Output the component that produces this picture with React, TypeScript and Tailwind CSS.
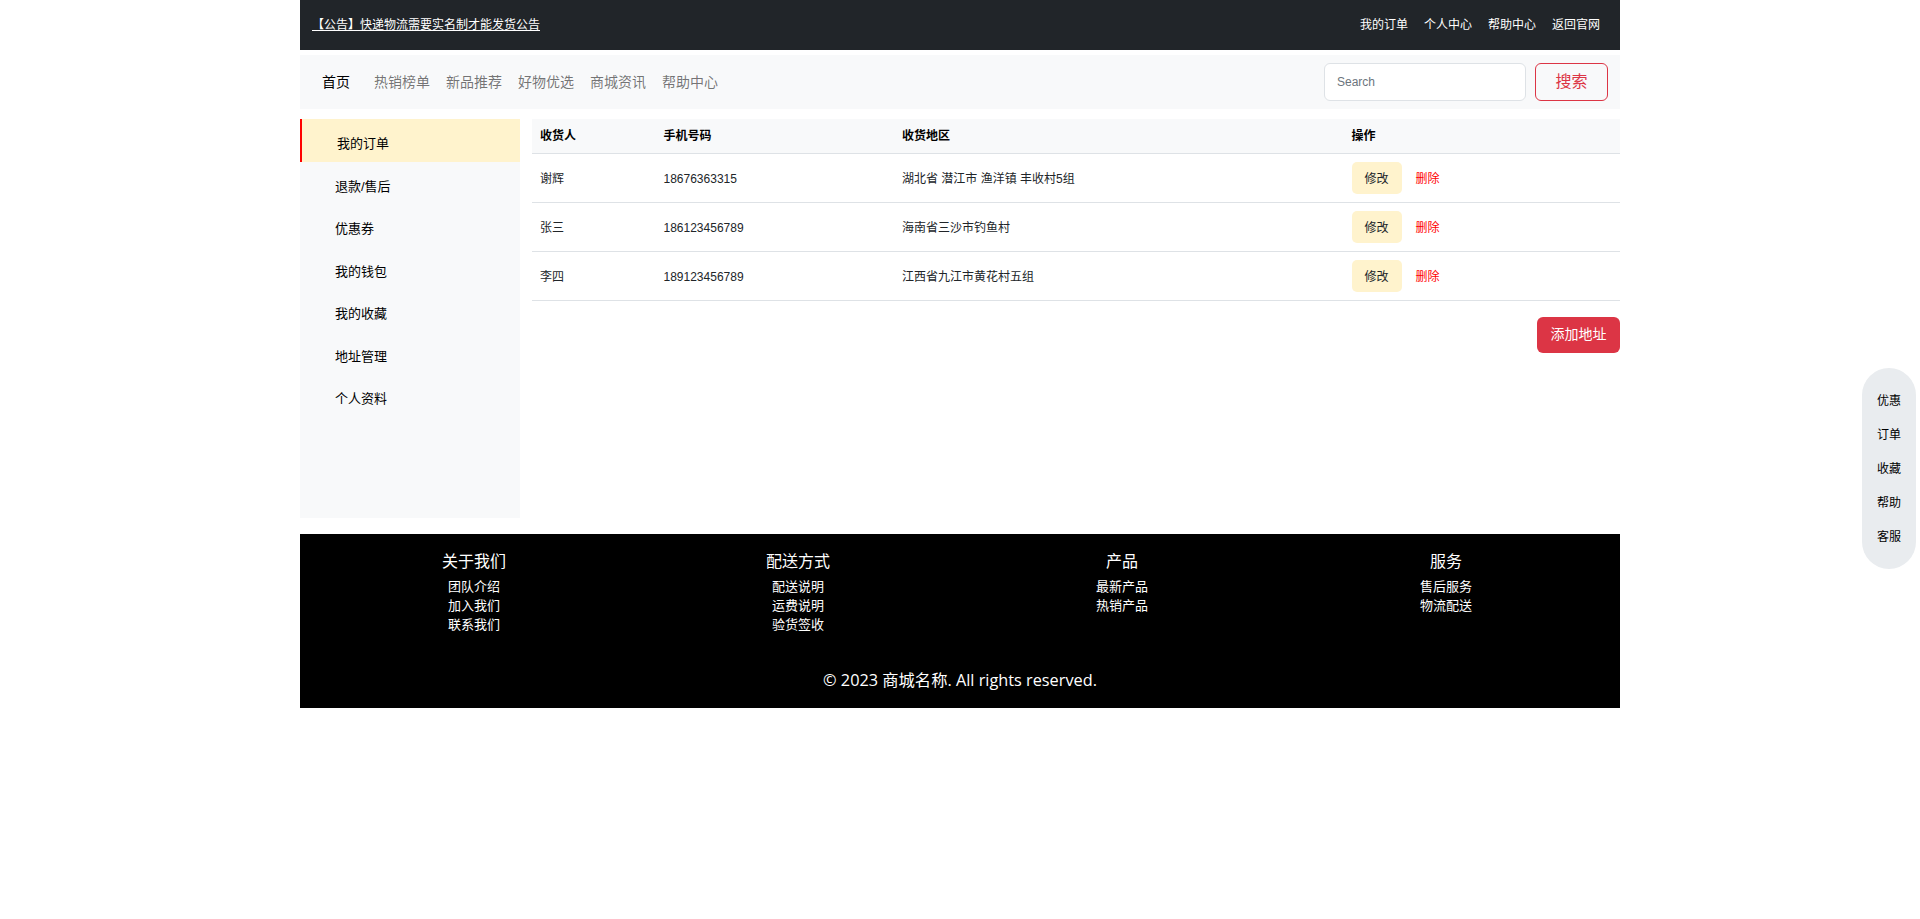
import React from 'react';

const topLinks = ['我的订单', '个人中心', '帮助中心', '返回官网'];
const navLinks = ['热销榜单', '新品推荐', '好物优选', '商城资讯', '帮助中心'];
const sideItems = ['我的订单', '退款/售后', '优惠券', '我的钱包', '我的收藏', '地址管理', '个人资料'];
const addresses = [
  { name: '谢辉', phone: '18676363315', area: '湖北省 潜江市 渔洋镇 丰收村5组' },
  { name: '张三', phone: '186123456789', area: '海南省三沙市钓鱼村' },
  { name: '李四', phone: '189123456789', area: '江西省九江市黄花村五组' },
];
const footerCols = [
  { title: '关于我们', links: ['团队介绍', '加入我们', '联系我们'] },
  { title: '配送方式', links: ['配送说明', '运费说明', '验货签收'] },
  { title: '产品', links: ['最新产品', '热销产品'] },
  { title: '服务', links: ['售后服务', '物流配送'] },
];
const floatItems = ['优惠', '订单', '收藏', '帮助', '客服'];

export default function App() {
  return (
    <div className="min-h-screen bg-white font-['Liberation_Sans','Noto_Sans_CJK_SC',sans-serif] text-[#212529]">
      <div className="mx-auto w-[1320px]">
        {/* top announcement bar */}
        <div className="flex h-[50px] items-center justify-between bg-[#212529] px-3">
          <a href="#" className="text-[12px] text-white underline">【公告】快递物流需要实名制才能发货公告</a>
          <div className="flex">
            {topLinks.map((t) => (
              <a key={t} href="#" className="px-2 text-[12px] text-white">{t}</a>
            ))}
          </div>
        </div>

        {/* nav bar */}
        <div className="mt-[5px] flex h-[54px] items-center justify-between bg-[#f8f9fa] pl-[22px] pr-3">
          <div className="flex items-center text-[14px]">
            <a href="#" className="mr-4 text-black">首页</a>
            {navLinks.map((t) => (
              <a key={t} href="#" className="px-2 text-black/55">{t}</a>
            ))}
          </div>
          <div className="flex items-center">
            <input
              placeholder="Search"
              className="h-[38px] w-[202px] rounded-md border border-[#dee2e6] bg-white px-3 text-[12px] outline-none placeholder:text-[#6c757d]"
            />
            <button className="ml-[9px] h-[38px] w-[73px] rounded-md border border-[#dc3545] text-[16px] text-[#dc3545]">搜索</button>
          </div>
        </div>

        {/* content */}
        <div className="mt-[10px] flex items-start">
          <div className="h-[399px] w-[220px] shrink-0 bg-[#f8f9fa]">
            {sideItems.map((t, i) => (
              <div
                key={t}
                className={
                  i === 0
                    ? 'flex h-[42.5px] items-center border-l-2 border-[#ff0000] bg-[#fff3cd] pl-[35px] pt-[7px] text-[13px] text-black'
                    : 'flex h-[42.5px] items-center pl-[35px] pt-[7px] text-[13px] text-black'
                }
              >
                {t}
              </div>
            ))}
          </div>

          <div className="flex-1 pl-3">
            <table className="w-full table-fixed border-collapse text-left text-[12px]">
              <thead>
                <tr className="h-[34px] border-b border-[#dee2e6] bg-[#f8f9fa] font-bold text-black">
                  <th className="w-[123.5px] pl-2">收货人</th>
                  <th className="w-[238.5px] pl-2">手机号码</th>
                  <th className="w-[449.5px] pl-2">收货地区</th>
                  <th className="pl-2">操作</th>
                </tr>
              </thead>
              <tbody>
                {addresses.map((a) => (
                  <tr key={a.name} className="h-[49px] border-b border-[#dee2e6]">
                    <td className="pl-2 pt-[2px]">{a.name}</td>
                    <td className="pl-2 pt-[2px]">{a.phone}</td>
                    <td className="pl-2 pt-[2px]">{a.area}</td>
                    <td className="pl-2">
                      <div className="flex items-center">
                        <button className="h-[32px] w-[50px] rounded-[5px] bg-[#fff3cd] pt-[2px] text-[12px] text-[#212529]">修改</button>
                        <a href="#" className="ml-[14px] pt-[2px] text-[12px] text-[#ff0000]">删除</a>
                      </div>
                    </td>
                  </tr>
                ))}
              </tbody>
            </table>
            <div className="mt-4 flex justify-end">
              <button className="h-[36px] w-[83px] rounded-md bg-[#dc3545] text-[14px] text-white">添加地址</button>
            </div>
          </div>
        </div>

        {/* footer */}
        <div className="mt-4 bg-black px-3 pb-[16px] pt-[18px] text-white">
          <div className="grid grid-cols-4">
            {footerCols.map((c) => (
              <div key={c.title} className="flex flex-col items-center">
                <div className="mb-[6px] text-[16px] leading-[19px]">{c.title}</div>
                {c.links.map((l) => (
                  <a key={l} href="#" className="text-[13px] leading-[19.2px] text-white">{l}</a>
                ))}
              </div>
            ))}
          </div>
          <div className="mt-[33px] text-center font-['Open_Sans','Noto_Sans_CJK_SC',sans-serif] text-[16.3px] leading-[24px]">© 2023 商城名称. All rights reserved.</div>
        </div>
      </div>

      {/* floating side menu */}
      <div className="fixed right-[4px] top-[40%] flex h-[201px] w-[54px] flex-col items-center rounded-full bg-[#e9ecef] pt-[16px]">
        {floatItems.map((t) => (
          <a key={t} href="#" className="flex h-[34px] items-center text-[12px] text-black">{t}</a>
        ))}
      </div>
    </div>
  );
}
